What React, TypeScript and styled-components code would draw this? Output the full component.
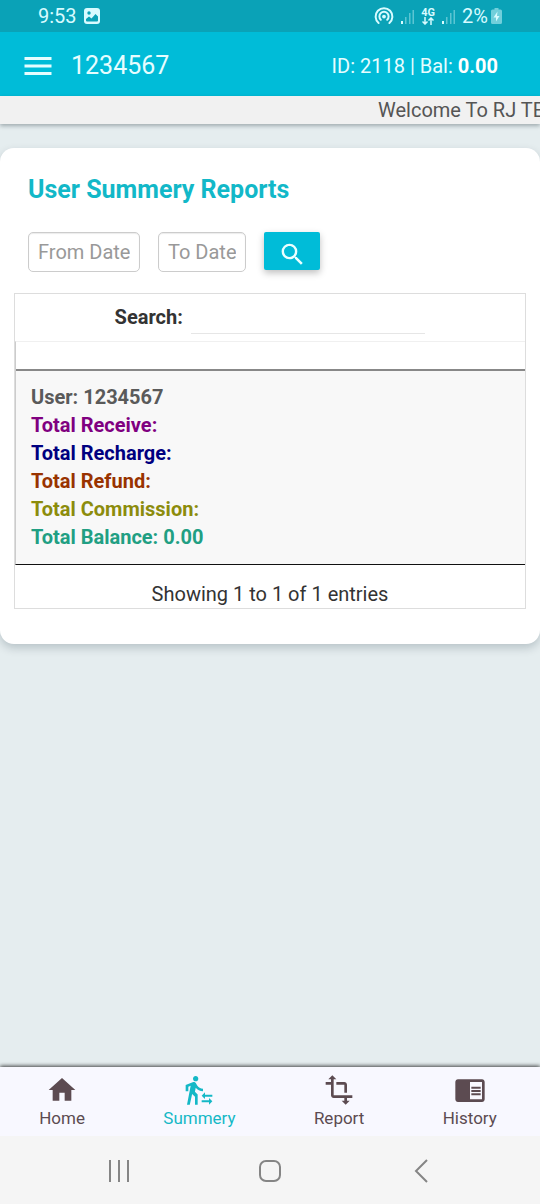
import React from "react";
import styled, { createGlobalStyle } from "styled-components";
import {
  MdChromeReaderMode,
  MdHome,
  MdMenu,
  MdSearch,
  MdTransferWithinAStation,
  MdTransform,
} from "react-icons/md";

const GlobalStyle = createGlobalStyle`
  *, *::before, *::after { box-sizing: border-box; }
  body {
    margin: 0;
    background: #e5edef;
    color: #333;
    font-family: Roboto, "Liberation Sans", sans-serif;
    font-size: 20px;
    line-height: 28px;
  }
  button, input { font: inherit; }
`;

const Page = styled.div`
  display: flex;
  flex-direction: column;
  min-height: 100vh;
`;

const StatusBar = styled.div`
  display: flex;
  align-items: center;
  justify-content: space-between;
  height: 32px;
  padding: 0 38px;
  background: #0aa2b7;
  color: #d8fbff;
`;

const StatusGroup = styled.div`
  display: flex;
  align-items: center;
  gap: 7px;
`;

const Network = styled.span`
  display: flex;
  flex-direction: column;
  align-items: center;
  font-size: 11px;
  font-weight: 700;
  line-height: 9px;
`;

const BatteryGroup = styled.span`
  display: flex;
  align-items: center;
  gap: 3px;
`;

const Header = styled.header`
  display: flex;
  align-items: center;
  height: 64px;
  padding: 3px 42px 0 20px;
  background: #00bcd8;
  color: #e6fdff;
`;

const MenuButton = styled.button`
  display: flex;
  padding: 0;
  border: 0;
  background: none;
  color: inherit;
`;

const Title = styled.h1`
  flex: 1;
  margin: 0 0 0 15px;
  font-size: 25px;
  font-weight: 400;
`;

const Balance = styled.span`
  b { color: #fff; }
`;

const Ticker = styled.div`
  height: 28px;
  padding-left: 70%;
  overflow: hidden;
  white-space: nowrap;
  background: #f1f1f1;
  color: #555;
  box-shadow: 0 2px 4px rgba(0, 20, 30, 0.3);
`;

const Main = styled.main`
  flex: 1;
  padding: 24px 0;
`;

const Card = styled.section`
  padding: 24px 14px 35px;
  border-radius: 14px;
  background: #fff;
  box-shadow: 0 4px 10px rgba(0, 30, 45, 0.2);
`;

const CardTitle = styled.h2`
  margin: 0 14px;
  color: #12b8c8;
  font-size: 25px;
  font-weight: 700;
  line-height: 36px;
`;

const Filters = styled.form`
  display: flex;
  align-items: flex-start;
  gap: 18px;
  margin: 24px 14px 21px;
`;

const DateInput = styled.input<{ $width: number }>`
  width: ${(p) => p.$width}px;
  height: 40px;
  padding: 0 9px;
  border: 1px solid #ccc;
  border-radius: 5px;
  background: #fff;
  box-shadow: inset 0 1px 1px rgba(0, 0, 0, 0.08);
  color: #555;
  &::placeholder { color: #999; opacity: 1; }
`;

const SearchButton = styled.button`
  display: flex;
  align-items: center;
  justify-content: center;
  width: 56px;
  height: 38px;
  padding: 6px 0 0;
  border: 0;
  border-radius: 2px;
  background: #00bcd8;
  color: #eaffff;
  box-shadow: 0 3px 7px rgba(0, 0, 0, 0.25);
`;

const Report = styled.div`
  border: 1px solid #ddd;
`;

const SearchRow = styled.div`
  display: flex;
  align-items: flex-start;
  justify-content: center;
  gap: 8px;
  padding: 6px 0 7px;
`;

const SearchLabel = styled.label`
  font-weight: 700;
  line-height: 34px;
`;

const SearchInput = styled.input`
  width: 46%;
  height: 34px;
  padding: 0 4px;
  border: 0;
  border-bottom: 1px solid #e6e6e6;
  background: none;
  color: #555;
`;

const Table = styled.table`
  width: 100%;
  border-collapse: separate;
  border-spacing: 0;
  border-top: 1px solid #f0f0f0;
  border-left: 1px solid #ccc;
  border-bottom: 1px solid #111;
  th {
    height: 29px;
    padding: 0;
    border-bottom: 2px solid #888;
  }
  td {
    padding: 12px 15px 13px;
    background: #f8f8f8;
  }
`;

const Line = styled.div<{ $color: string }>`
  color: ${(p) => p.$color};
  font-weight: 700;
`;

const Entries = styled.p`
  margin: 0;
  padding: 15px 0 0;
  text-align: center;
`;

const TabBar = styled.nav`
  display: flex;
  justify-content: space-around;
  height: 69px;
  padding-right: 4px;
  background: #f8f8ff;
  box-shadow: 0 -1px 4px rgba(0, 0, 0, 0.75);
`;

const Tab = styled.a<{ $active?: boolean }>`
  display: flex;
  flex-direction: column;
  align-items: center;
  padding-top: 7px;
  color: ${(p) => (p.$active ? "#14b8c6" : "#5c4b51")};
  font-size: 17px;
  line-height: 24px;
  text-decoration: none;
`;

const SystemBar = styled.div`
  display: flex;
  position: relative;
  align-items: center;
  justify-content: space-around;
  height: 68px;
  padding: 2px 43px 0;
  background: #f5f5f5;
`;

const SystemButton = styled.button`
  display: flex;
  padding: 0;
  border: 0;
  background: none;
  color: #858585;
`;

const PictureIcon = () => (
  <svg width="16" height="16" viewBox="0 0 16 16" aria-hidden="true">
    <rect width="16" height="16" rx="3" fill="currentColor" />
    <circle cx="5" cy="5" r="1.7" fill="#0aa2b7" />
    <path d="M2 12.5V11l3-2.5 2.5 2L11.500 6 14 8.500v4a1 1 0 0 1-1 1H3a1 1 0 0 1-1-1z" fill="#0aa2b7" />
  </svg>
);

const HotspotIcon = () => (
  <svg width="20" height="18" viewBox="0 0 20 18" fill="none" stroke="currentColor" strokeWidth="2" strokeLinecap="round" aria-hidden="true">
    <path d="M4.600 16A8.400 8.400 0 1 1 15.400 16" />
    <path d="M6.800 12.700A4.600 4.600 0 1 1 13.200 12.700" />
    <circle cx="10" cy="9.600" r="1.900" fill="currentColor" stroke="none" />
  </svg>
);

const SignalIcon = () => (
  <svg width="13" height="15" viewBox="0 0 13 15" fill="currentColor" aria-hidden="true">
    <rect x="0" y="12" width="2" height="3" />
    <g opacity="0.4">
      <rect x="4" y="8" width="1.500" height="7" />
      <rect x="8" y="4" width="1.500" height="11" />
      <rect x="11.500" y="1" width="1.500" height="14" />
    </g>
  </svg>
);

const DataArrows = () => (
  <svg width="12" height="8" viewBox="0 0 12 8" fill="none" stroke="currentColor" strokeWidth="1.500" aria-hidden="true">
    <path d="M3 0v7M.5 4.500 3 7l2.500-2.500M9 8V1M6.500 3.500 9 1l2.500 2.500" />
  </svg>
);

const BatteryIcon = () => (
  <svg width="11" height="16" viewBox="0 0 11 16" fill="currentColor" aria-hidden="true">
    <path opacity="0.5" d="M3.500 0h4v1.500H9.500a1.500 1.500 0 0 1 1.500 1.500v11.500a1.500 1.500 0 0 1-1.500 1.500h-8A1.500 1.500 0 0 1 0 14.500V3a1.500 1.500 0 0 1 1.500-1.500h2z" />
    <path d="M6.500 3.500 2.500 9.500h2.500v4l3.500-5.500H6z" />
  </svg>
);

const lines = [
  { text: "User: 1234567", color: "#5a5a5a" },
  { text: "Total Receive:", color: "#800080" },
  { text: "Total Recharge:", color: "#000080" },
  { text: "Total Refund:", color: "#993300" },
  { text: "Total Commission:", color: "#8c8c0c" },
  { text: "Total Balance: 0.00", color: "#219f83" },
];

const tabs = [
  { label: "Home", Icon: MdHome },
  { label: "Summery", Icon: MdTransferWithinAStation, active: true },
  { label: "Report", Icon: MdTransform },
  { label: "History", Icon: MdChromeReaderMode },
];

export default function App() {
  return (
    <Page>
      <GlobalStyle />
      <StatusBar>
        <StatusGroup>
          <span>9:53</span>
          <PictureIcon />
        </StatusGroup>
        <StatusGroup>
          <HotspotIcon />
          <SignalIcon />
          <Network>
            4G
            <DataArrows />
          </Network>
          <SignalIcon />
          <BatteryGroup>
            <span>2%</span>
            <BatteryIcon />
          </BatteryGroup>
        </StatusGroup>
      </StatusBar>
      <Header>
        <MenuButton aria-label="Menu">
          <MdMenu size={36} />
        </MenuButton>
        <Title>1234567</Title>
        <Balance>
          ID: 2118 | Bal: <b>0.00</b>
        </Balance>
      </Header>
      <Ticker>Welcome To RJ TE</Ticker>
      <Main>
        <Card>
          <CardTitle>User Summery Reports</CardTitle>
          <Filters onSubmit={(e) => e.preventDefault()}>
            <DateInput $width={112} placeholder="From Date" aria-label="From Date" />
            <DateInput $width={88} placeholder="To Date" aria-label="To Date" />
            <SearchButton type="submit" aria-label="Search reports">
              <MdSearch size={29} />
            </SearchButton>
          </Filters>
          <Report>
            <SearchRow>
              <SearchLabel htmlFor="table-search">Search:</SearchLabel>
              <SearchInput id="table-search" type="search" />
            </SearchRow>
            <Table>
              <thead>
                <tr>
                  <th scope="col" aria-label="Summery" />
                </tr>
              </thead>
              <tbody>
                <tr>
                  <td>
                    {lines.map((l) => (
                      <Line key={l.text} $color={l.color}>
                        {l.text}
                      </Line>
                    ))}
                  </td>
                </tr>
              </tbody>
            </Table>
            <Entries>Showing 1 to 1 of 1 entries</Entries>
          </Report>
        </Card>
      </Main>
      <TabBar>
        {tabs.map(({ label, Icon, active }) => (
          <Tab key={label} href={`#${label.toLowerCase()}`} $active={active}>
            <Icon size={32} />
            {label}
          </Tab>
        ))}
      </TabBar>
      <SystemBar>
        <SystemButton aria-label="Recent apps">
          <svg width="24" height="24" viewBox="0 0 24 24" stroke="currentColor" strokeWidth="2" aria-hidden="true">
            <path d="M3 1v22M12 1v22M21 1v22" />
          </svg>
        </SystemButton>
        <SystemButton aria-label="Home screen">
          <svg width="24" height="24" viewBox="0 0 24 24" fill="none" stroke="currentColor" strokeWidth="2" aria-hidden="true">
            <rect x="2" y="2" width="20" height="20" rx="6" />
          </svg>
        </SystemButton>
        <SystemButton aria-label="Back">
          <svg width="24" height="24" viewBox="0 0 24 24" fill="none" stroke="currentColor" strokeWidth="2" aria-hidden="true">
            <path d="M18 1 7 12l11 11" />
          </svg>
        </SystemButton>
      </SystemBar>
    </Page>
  );
}
